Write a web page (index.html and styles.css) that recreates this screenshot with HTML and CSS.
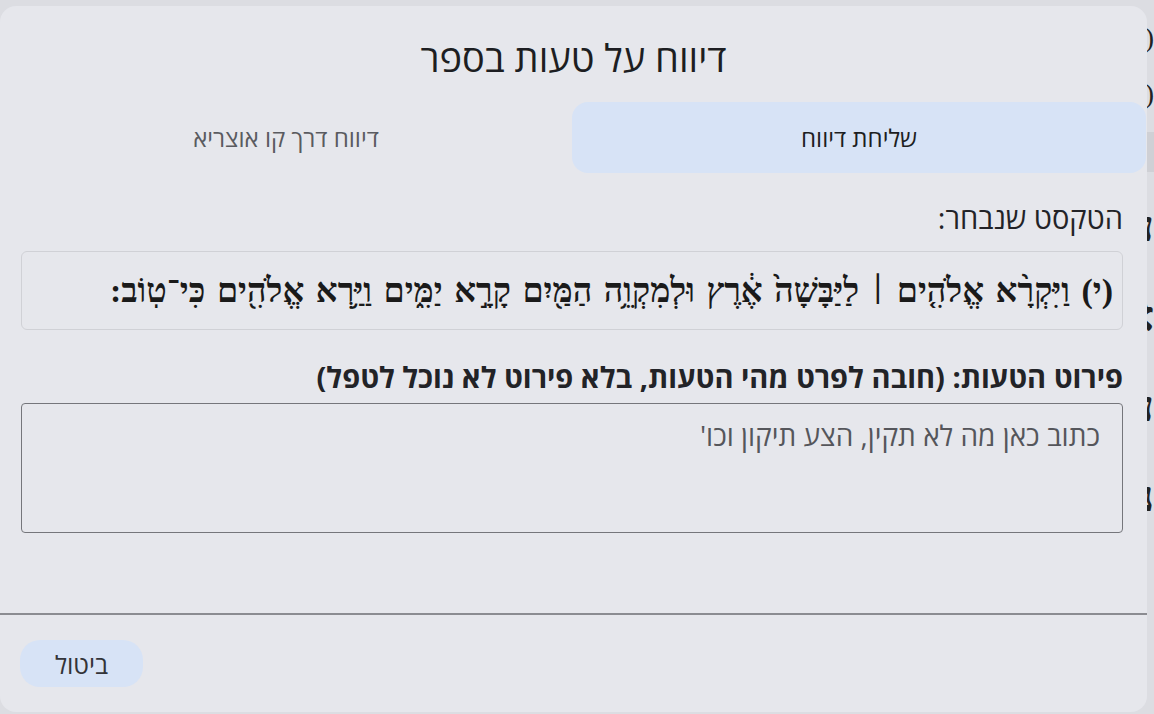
FILE: index.html
```html
<!DOCTYPE html>
<html lang="he" dir="rtl">
<head>
<meta charset="utf-8">
<title>דיווח על טעות בספר</title>
<link rel="stylesheet" href="styles.css">
</head>
<body>
<div class="backdrop">
  <div class="bg-line">(א)</div>
  <div class="bg-line">(ב)</div>
  <div class="bg-bar"></div>
  <div class="bg-line big">עוד</div>
  <div class="bg-line big">אלה</div>
  <div class="bg-line big">עש</div>
  <div class="bg-line big">נח</div>
</div>
<div class="dialog" role="dialog">
  <h1 class="title">דיווח על טעות בספר</h1>
  <div class="tabs">
    <div class="tab active">שליחת דיווח</div>
    <div class="tab">דיווח דרך קו אוצריא</div>
  </div>
  <div class="content">
    <div class="label">הטקסט שנבחר:</div>
    <div class="verse">(י) וַיִּקְרָ֨א אֱלֹהִ֤ים <span class="pasek">׀</span> לַיַּבָּשָׁה֙ אֶ֔רֶץ וּלְמִקְוֵ֥ה הַמַּ֖יִם קָרָ֣א יַמִּ֑ים וַיַּ֥רְא אֱלֹהִ֖ים כִּי־טֽוֹב:</div>
    <div class="label strong">פירוט הטעות: (חובה לפרט מהי הטעות, בלא פירוט לא נוכל לטפל)</div>
    <textarea class="details" placeholder="כתוב כאן מה לא תקין, הצע תיקון וכו'"></textarea>
  </div>
  <div class="footer">
    <button class="cancel">ביטול</button>
  </div>
</div>
</body>
</html>
```

FILE: styles.css
```css
html, body {
  margin: 0;
  height: 100%;
}
body {
  background: #dcdde2;
  overflow: hidden;
  position: relative;
  font-family: "Open Sans", "Noto Sans", "DejaVu Sans", sans-serif;
  color: #1d1e22;
}
.backdrop {
  width: 7px;
  overflow: hidden;
  display: flex;
  flex-direction: column;
  align-items: flex-start;
  padding: 20px 0 0 0;
  gap: 20px;
  font-family: "Liberation Serif", serif;
  font-size: 28px;
  color: #222;
}
.bg-line { line-height: 36px; white-space: nowrap; }
.bg-line.big { font-size: 44px; font-weight: bold; line-height: 70px; }
.bg-bar { height: 40px; width: 20px; flex: none; background: #cfd0d5; }

.dialog {
  position: absolute;
  top: 6px;
  left: 0;
  width: 1147px;
  height: 706px;
  box-sizing: border-box;
  background: #e6e7ec;
  border-radius: 16px;
  display: flex;
  flex-direction: column;
}
.title {
  margin: 0;
  padding-top: 27px;
  text-align: center;
  font-size: 38px;
  font-weight: 400;
  line-height: 48px;
  color: #1d1e22;
}
.tabs {
  display: flex;
  margin-top: 21px;
  height: 71px;
  padding-right: 1px;
}
.tab {
  flex: 1;
  display: flex;
  align-items: center;
  justify-content: center;
  font-size: 24px;
  font-stretch: 88%;
  color: #5a5b60;
  border-radius: 16px;
}
.tab.active {
  flex: 0 0 574px;
  background: #d7e3f6;
  color: #1d1e22;
  font-weight: 500;
}
.content {
  padding: 0 24px 0 21px;
  display: flex;
  flex-direction: column;
}
.label {
  margin-top: 27px;
  font-size: 29px;
  line-height: 36px;
  color: #222327;
}
.strong {
  font-weight: 700;
  margin-top: 29px;
}
.verse {
  margin-top: 15px;
  height: 79px;
  box-sizing: border-box;
  border: 1px solid #d0d1d6;
  border-radius: 6px;
  padding: 0 9px;
  display: flex;
  align-items: center;
  font-family: "Liberation Serif", "DejaVu Serif", serif;
  font-size: 34px;
  font-weight: 700;
  word-spacing: 3px;
  color: #1a1a1a;
  white-space: pre;
}
.pasek {
  font-size: 26px;
}
.details {
  margin-top: 8px;
  height: 130px;
  box-sizing: border-box;
  border: 1px solid #75767b;
  border-radius: 4px;
  background: transparent;
  resize: none;
  padding: 12px 22px;
  font-family: inherit;
  font-size: 28px;
  line-height: 38px;
  direction: rtl;
}
.details::placeholder { color: #55565b; }
.footer {
  margin-top: auto;
  height: 99px;
  box-sizing: border-box;
  border-top: 2px solid #8b8c91;
  display: flex;
  justify-content: flex-end;
  align-items: flex-start;
  padding: 25px 0 0 20px;
}
.cancel {
  width: 123px;
  height: 47px;
  border: none;
  border-radius: 20px;
  background: #d7e3f6;
  font-family: inherit;
  font-size: 25px;
  color: #333438;
  padding: 0;
}
```
